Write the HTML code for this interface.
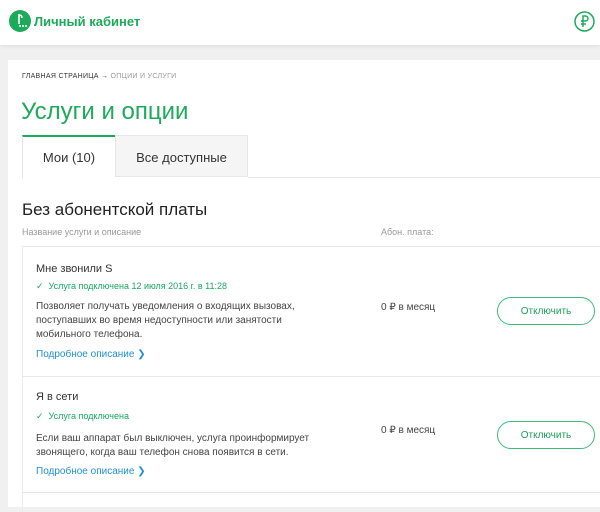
<!DOCTYPE html>
<html><head><meta charset="utf-8"><style>
*{margin:0;padding:0;box-sizing:border-box}
body{width:600px;height:507px;overflow:hidden;background:#f0f0f0;font-family:"Liberation Sans",sans-serif;position:relative;color:#333}
.a{position:absolute;white-space:nowrap}
.hdr{position:absolute;left:0;top:0;width:600px;height:45px;background:#fff;box-shadow:0 1px 4px rgba(0,0,0,.08)}
.card{position:absolute;left:8px;top:60px;width:592px;height:447px;background:#fff}
.row{position:absolute;left:22px;width:578px;border-top:1px solid #e6e6e6;border-left:1px solid #ececec}
.btn{position:absolute;left:497px;width:98px;height:28px;border:1px solid #3dbb7a;border-radius:14px;color:#1a9f5b;font-size:10px;text-align:center;line-height:28px}
.t{font-size:11px;color:#333}
.s{font-size:9px;color:#1aa860}
.d{font-size:10px;color:#444;line-height:14px}
.l{font-size:10px;color:#1f8fd6}
.p{font-size:10px;color:#444}
</style></head><body>
<div class="hdr">
<svg class="a" style="left:9px;top:10px" width="22" height="22" viewBox="0 0 22 22"><circle cx="11" cy="11" r="11" fill="#1eaa5b"/><path d="M10 4v10M10 5q3 0 3 3" stroke="#fff" stroke-width="1.6" fill="none"/><circle cx="11" cy="16" r="1" fill="#fff"/><circle cx="14" cy="16" r="1" fill="#fff"/><circle cx="17" cy="16" r="1" fill="#fff"/></svg>
<div class="a" style="left:34px;top:14px;font-size:13px;font-weight:bold;color:#1eaa5b">Личный кабинет</div>
<svg class="a" style="left:574px;top:11px" width="21" height="21" viewBox="0 0 21 21"><circle cx="10.5" cy="10.5" r="9.5" fill="none" stroke="#1eaa5b" stroke-width="1.5"/><path d="M9 16V5h2.5a2.5 2.5 0 0 1 0 5H7M7 13h5" stroke="#1eaa5b" stroke-width="1.5" fill="none"/></svg>
</div>
<div class="card"></div>
<div class="a" style="left:22px;top:73px;font-size:7px;color:#333;letter-spacing:.3px">ГЛАВНАЯ СТРАНИЦА → <span style="color:#999">ОПЦИИ И УСЛУГИ</span></div>
<div class="a" style="left:21px;top:98px;font-size:24px;color:#1eaa5b">Услуги и опции</div>
<div class="a" style="left:22px;top:135px;width:93px;height:43px;background:#fff;border-top:2px solid #1eaa5b;border-left:1px solid #e6e6e6;font-size:13px;text-align:center;line-height:41px;color:#333">Мои (10)</div>
<div class="a" style="left:115px;top:135px;width:133px;height:42px;background:#f5f5f5;border:1px solid #e6e6e6;font-size:13px;text-align:center;line-height:44px;color:#333">Все доступные</div>
<div class="a" style="left:248px;top:177px;width:352px;border-top:1px solid #e6e6e6"></div>
<div class="a" style="left:22px;top:200px;font-size:17px;color:#222">Без абонентской платы</div>
<div class="a" style="left:22px;top:227px;font-size:9px;color:#999">Название услуги и описание</div>
<div class="a" style="left:381px;top:227px;font-size:9px;color:#999">Абон. плата:</div>
<div class="row" style="top:246px;height:130px"></div>
<div class="row" style="top:376px;height:116px"></div>
<div class="row" style="top:492px;height:20px"></div>
<div class="a t" style="left:36px;top:263px">Мне звонили S</div>
<div class="a s" style="left:36px;top:281px">✓&nbsp; Услуга подключена 12 июля 2016 г. в 11:28</div>
<div class="a d" style="left:36px;top:300px">Позволяет получать уведомления о входящих вызовах,<br>поступавших во время недоступности или занятости<br>мобильного телефона.</div>
<div class="a l" style="left:36px;top:349px">Подробное описание ❯</div>
<div class="a p" style="left:381px;top:302px">0 ₽ в месяц</div>
<div class="btn" style="top:297px">Отключить</div>
<div class="a t" style="left:36px;top:391px">Я в сети</div>
<div class="a s" style="left:36px;top:411px">✓&nbsp; Услуга подключена</div>
<div class="a d" style="left:36px;top:432px">Если ваш аппарат был выключен, услуга проинформирует<br>звонящего, когда ваш телефон снова появится в сети.</div>
<div class="a l" style="left:36px;top:466px">Подробное описание ❯</div>
<div class="a p" style="left:381px;top:425px">0 ₽ в месяц</div>
<div class="btn" style="top:421px">Отключить</div>
</body></html>
